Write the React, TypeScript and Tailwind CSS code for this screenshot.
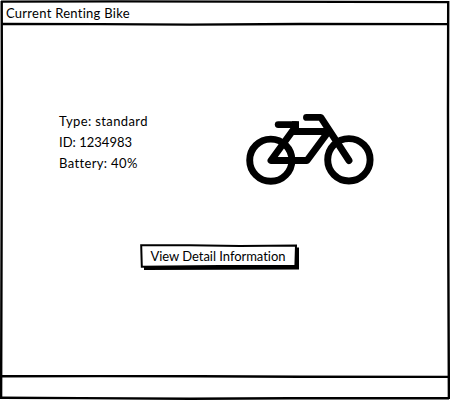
const label = "font-['Lato','Noto_Sans',sans-serif] text-black whitespace-nowrap";

function SketchFrame() {
  return (
    <svg className="pointer-events-none absolute inset-0" width="450" height="400" viewBox="0 0 450 400" fill="none" stroke="#000" strokeWidth="2.4">
      <path d="M1 1.6 L120 1.4 L235 1.6 L449 2.1" />
      <path d="M2 24 L100 24.1 L190 24.6 L300 24 L449 24.1" />
      <path d="M1.7 1 L1.9 100 L1.6 230 L1.1 399" />
      <path d="M448.2 1 L448 110 L448.3 250 L448.9 399" />
      <path d="M1 376.3 L100 376.1 L200 376.2 L300 376.8 L449 376.9" />
      <path d="M1 397.8 L80 398.1 L190 398.8 L290 398.2 L449 398.3" />
    </svg>
  );
}

function Bike() {
  return (
    <svg className="block" width="130" height="74" viewBox="245 112 130 74" fill="none" stroke="#000" strokeLinejoin="round" strokeLinecap="round">
      <circle cx="270.8" cy="160.2" r="21.1" strokeWidth="6.9" />
      <circle cx="348.9" cy="159.8" r="21.2" strokeWidth="6.9" />
      <path d="M278.2 124.6 H295.5" strokeWidth="6.8" />
      <path d="M292 121.2 H299 V130 H292Z" fill="#000" stroke="none" />
      <path d="M295 127.5 L271 160.5 H307 L328.5 131.5" strokeWidth="6.9" />
      <path d="M293 131.5 H327" strokeWidth="7.2" />
      <path d="M306.5 117.4 H320.8 L349 160.5" strokeWidth="6.9" />
    </svg>
  );
}

export default function App() {
  return (
    <div className="relative flex h-[400px] w-[450px] flex-col overflow-hidden bg-white">
      <header className="flex h-6 items-center pl-[6px] pt-[2px]">
        <h1 className={`${label} text-[13px] leading-5 tracking-[0.27px]`}>Current Renting Bike</h1>
      </header>
      <main className="flex h-[352px] flex-col items-center">
        <section className="flex w-full pl-[59px] pt-[87px]">
          <div className={`${label} w-[186px] text-[13px] leading-[21px]`}>
            <p className="tracking-[0.38px]">Type: standard</p>
            <p className="tracking-[0.02px]">ID: 1234983</p>
            <p className="tracking-[0.36px]">Battery: 40%</p>
          </div>
          <div className="pt-px">
            <Bike />
          </div>
        </section>
        <button className="relative mt-[58px] mr-[10px] flex h-[27px] w-[160px] items-start justify-start">
          <svg className="absolute inset-0" width="160" height="27" viewBox="0 0 160 27">
            <path d="M4 3.5 H159 V25.5 L4 26Z" fill="#000" />
            <path d="M1.2 1.2 L50 1.3 L100 1.9 L156 1.4 L155.4 21.8 L80 21.9 L1.8 22.8Z" fill="#fff" stroke="#000" strokeWidth="2" />
          </svg>
          <span className={`${label} relative ml-[10.5px] mt-[2px] text-[13px] leading-5 tracking-[-0.04px]`}>View Detail Information</span>
        </button>
      </main>
      <footer className="h-6" />
      <SketchFrame />
    </div>
  );
}
